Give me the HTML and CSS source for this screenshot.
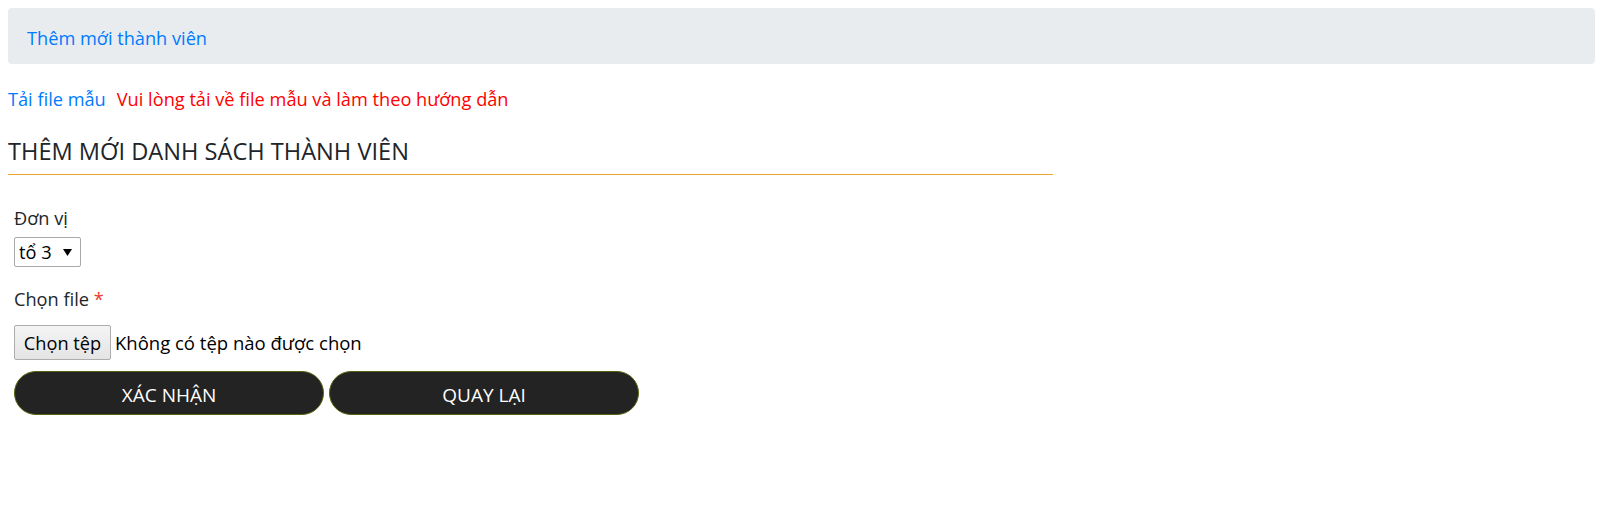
FILE: index.html
```html
<!DOCTYPE html>
<html lang="vi">
<head>
<meta charset="utf-8">
<title>Thêm mới thành viên</title>
<link rel="stylesheet" href="styles.css">
</head>
<body>
<nav class="crumb"><a class="crumb-link" href="#">Thêm mới thành viên</a></nav>
<p class="note"><a class="note-link" href="#">Tải file mẫu</a><span class="note-warn">Vui lòng tải về file mẫu và làm theo hướng dẫn</span></p>
<h4 class="title">THÊM MỚI DANH SÁCH THÀNH VIÊN</h4>
<form class="form">
  <div class="field">
    <label class="label">Đơn vị</label>
    <div class="select"><span>tổ 3</span><svg class="caret" width="9" height="7" viewBox="0 0 9 7"><path d="M0 0H9L4.5 7Z" fill="#000"/></svg></div>
  </div>
  <div class="field">
    <label class="label">Chọn file <span class="req">*</span></label>
    <div class="file"><button type="button" class="file-btn">Chọn tệp</button><span class="file-name">Không có tệp nào được chọn</span></div>
  </div>
  <div class="actions">
    <button type="button" class="btn">XÁC NHẬN</button>
    <button type="button" class="btn">QUAY LẠI</button>
  </div>
</form>
</body>
</html>
```
FILE: styles.css
```css
html, body { background: #fff; }
body {
  margin: 8px;
  font-family: "Open Sans", "Noto Sans", sans-serif;
  font-size: 18.2px;
  line-height: 24px;
  color: #212529;
}
a { text-decoration: none; }
.crumb {
  background: #e9ecef;
  border-radius: 4px;
  padding: 18px 19px 14px;
  height: 24px;
}
.crumb-link { color: #007bff; }
.note { margin: 23px 0 0; }
.note-link { color: #007bff; }
.note-warn { color: #ff0000; margin-left: 11px; }
.title {
  margin: 26px 0 0;
  width: 1045px;
  font-size: 23.6px;
  font-weight: 400;
  line-height: 29px;
  padding-bottom: 8px;
  border-bottom: 1px solid #e9a42f;
}
.form { padding: 31px 6px 0; }
.field { display: flex; flex-direction: column; align-items: flex-start; }
.field + .field { margin-top: 20px; }
.label { display: block; }
.req { color: #ec3a2c; }
.select {
  margin-top: 7px;
  box-sizing: border-box;
  width: 67px;
  height: 30px;
  border: 1px solid #a9a9a9;
  border-radius: 2px;
  padding: 0 8px 0 4px;
  display: flex;
  align-items: center;
  justify-content: space-between;
  color: #000;
}
.caret { display: block; }
.file { margin-top: 14px; display: flex; align-items: center; gap: 4px; }
.file-name { color: #000; font-size: 18.5px; }
.file-btn {
  box-sizing: border-box;
  height: 35px;
  width: 97px;
  padding: 0;
  font: inherit;
  color: #000;
  background: linear-gradient(#f4f4f4, #e4e4e4);
  border: 1px solid #adadad;
  border-radius: 2px;
}
.actions { margin-top: 11px; display: flex; gap: 5px; }
.btn {
  box-sizing: border-box;
  width: 310px;
  height: 44px;
  border-radius: 22px;
  background: #232323;
  border: 1px solid #5a6410;
  color: #fff;
  font: inherit;
  font-size: 19px;
  padding: 3px 0 0;
}
```
